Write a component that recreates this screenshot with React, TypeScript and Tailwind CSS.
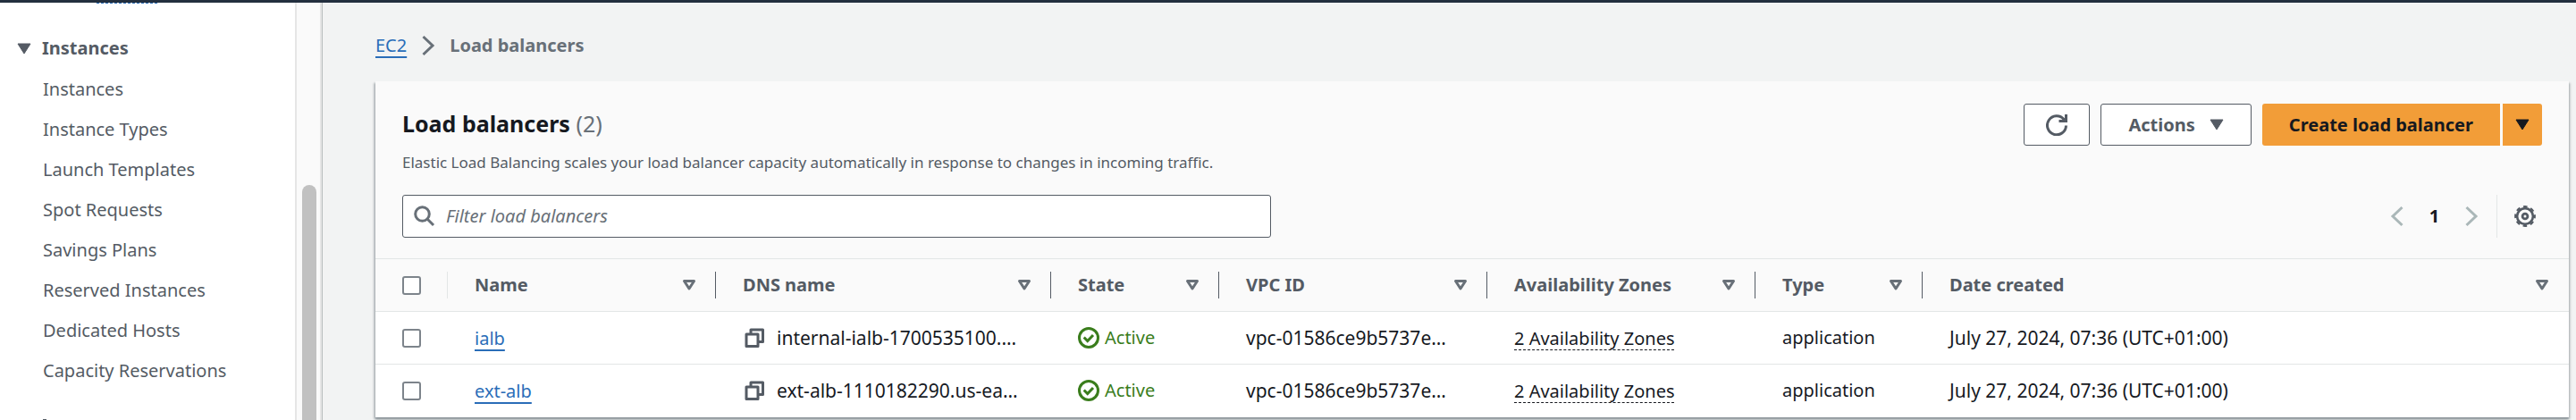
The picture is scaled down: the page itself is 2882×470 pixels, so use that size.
import React from "react";

const sidebarLinks = [
  "Instances",
  "Instance Types",
  "Launch Templates",
  "Spot Requests",
  "Savings Plans",
  "Reserved Instances",
  "Dedicated Hosts",
  "Capacity Reservations",
];

const columns = ["Name", "DNS name", "State", "VPC ID", "Availability Zones", "Type", "Date created"];

const loadBalancers = [
  {
    name: "ialb",
    dns: "internal-ialb-1700535100.…",
    state: "Active",
    vpc: "vpc-01586ce9b5737e…",
    zones: "2 Availability Zones",
    type: "application",
    created: "July 27, 2024, 07:36 (UTC+01:00)",
  },
  {
    name: "ext-alb",
    dns: "ext-alb-1110182290.us-ea…",
    state: "Active",
    vpc: "vpc-01586ce9b5737e…",
    zones: "2 Availability Zones",
    type: "application",
    created: "July 27, 2024, 07:36 (UTC+01:00)",
  },
];

function CaretDown({ className = "" }: { className?: string }) {
  return (
    <svg viewBox="0 0 16 13" className={`h-[13px] w-4 shrink-0 ${className}`} aria-hidden="true">
      <path d="M1 1h14L8 12z" fill="currentColor" stroke="currentColor" strokeLinejoin="round" />
    </svg>
  );
}

function SortIcon() {
  return (
    <svg viewBox="0 0 16 14" className="h-3.5 w-4" aria-hidden="true">
      <path d="M2.5 2.5h11L8 11z" fill="none" stroke="currentColor" strokeWidth="3" strokeLinejoin="round" />
    </svg>
  );
}

function Chevron({ flip = false, className = "" }: { flip?: boolean; className?: string }) {
  return (
    <svg viewBox="0 0 16 24" className={`h-6 w-4 ${className}`} aria-hidden="true">
      <path
        d={flip ? "M13.500 2L3 12l10.500 10" : "M2.500 2L13 12L2.500 22"}
        fill="none"
        stroke="currentColor"
        strokeWidth="3"
      />
    </svg>
  );
}

function SearchIcon() {
  return (
    <svg viewBox="0 0 24 24" className="h-6 w-6 shrink-0" aria-hidden="true">
      <g fill="none" stroke="currentColor" strokeWidth="3">
        <circle cx="9.500" cy="9.500" r="7.800" />
        <path d="M15 15L22 22" />
      </g>
    </svg>
  );
}

function RefreshIcon() {
  return (
    <svg viewBox="0 0 24 24" className="h-6 w-6" aria-hidden="true">
      <g fill="none" stroke="currentColor" strokeWidth="3">
        <path d="M22.500 12.500A10.500 10.500 0 1 1 20 5.500L22 8" />
        <path d="M22.500 0v7.500H14.500" />
      </g>
    </svg>
  );
}

function GearIcon() {
  return (
    <svg viewBox="0 0 24 24" className="h-6 w-6" aria-hidden="true">
      <g fill="none" stroke="currentColor">
        <circle cx="12" cy="12" r="8.900" strokeWidth="2.600" />
        <circle cx="12" cy="12" r="10.800" strokeWidth="2.200" strokeDasharray="4.600 3.882" strokeDashoffset="2.300" />
        <circle cx="12" cy="12" r="2.900" strokeWidth="2.800" />
      </g>
    </svg>
  );
}

function CopyIcon() {
  return (
    <svg viewBox="0 0 22 22" className="h-[22px] w-[22px] shrink-0" aria-hidden="true">
      <g fill="none" stroke="currentColor" strokeWidth="3" strokeLinejoin="round">
        <path d="M2 7h13v13.500H2z" />
        <path d="M7 7V2h13.500v13.500H15" />
      </g>
    </svg>
  );
}

function CheckCircle() {
  return (
    <svg viewBox="0 0 24 24" className="h-6 w-6 shrink-0" aria-hidden="true">
      <g fill="none" stroke="currentColor" strokeWidth="3">
        <circle cx="12" cy="12" r="10.500" />
        <path d="M6.700 11.500l4 4 6.300-6.500" />
      </g>
    </svg>
  );
}

function Checkbox({ label }: { label: string }) {
  return (
    <input
      type="checkbox"
      aria-label={label}
      className="block h-[21px] w-[21px] appearance-none rounded-[3px] border-2 border-[#7d848b] bg-white"
    />
  );
}

function Sidebar() {
  return (
    <div className="flex w-[361px] shrink-0 border-r border-[#b9bebe] bg-white">
      <nav aria-label="EC2" className="relative flex-1 overflow-hidden pt-9">
        <span className="absolute left-[108px] top-0 w-[68px] border-t border-dashed border-[#2a6db8]" />
        <button className="ml-[19px] flex h-[30px] items-center gap-3 text-xl font-bold">
          <CaretDown />
          Instances
        </button>
        <ul className="mt-2 pl-12">
          {sidebarLinks.map((link) => (
            <li key={link} className="flex h-[45px] items-center">
              <a href="#">{link}</a>
            </li>
          ))}
        </ul>
        <span className="absolute bottom-0 left-12 h-px w-1 bg-[#545b64]" />
      </nav>
      <div className="w-[30px] border-x-2 border-[#e6e6e6] bg-[#fafafa] pl-1.5 pt-[204px]">
        <div className="h-full w-4 rounded-t-full bg-[#c1c1c1]" />
      </div>
    </div>
  );
}

function Toolbar() {
  return (
    <div className="flex items-start justify-between">
      <div>
        <h1 className="text-[25px] font-bold leading-9 text-[#16191f]">
          Load balancers <span className="font-normal text-[#687078]">(2)</span>
        </h1>
        <p className="mt-3.5 text-[17px] leading-6">
          Elastic Load Balancing scales your load balancer capacity automatically in response to changes in incoming
          traffic.
        </p>
      </div>
      <div className="-mt-1 flex gap-3 text-xl font-bold">
        <button
          aria-label="Refresh"
          className="flex h-[47px] w-[74px] items-center justify-center rounded-[3px] border border-[#545b64] bg-white"
        >
          <RefreshIcon />
        </button>
        <button className="flex h-[47px] items-center gap-4 rounded-[3px] border border-[#545b64] bg-white px-[30px]">
          Actions
          <CaretDown />
        </button>
        <div className="flex gap-[3px] text-[#16191f]">
          <button className="h-[47px] rounded-l-[3px] bg-[#f29d38] px-[30px]">Create load balancer</button>
          <button
            aria-label="More create options"
            className="flex h-[47px] w-11 items-center justify-center rounded-r-[3px] bg-[#f29d38]"
          >
            <CaretDown />
          </button>
        </div>
      </div>
    </div>
  );
}

function FilterRow() {
  return (
    <div className="mt-6 flex items-center justify-between">
      <label className="flex h-12 w-[972px] items-center gap-3 rounded-[3px] border border-[#545b64] bg-white px-3 text-[#687078]">
        <SearchIcon />
        <input
          type="text"
          aria-label="Filter load balancers"
          placeholder="Filter load balancers"
          className="w-full bg-transparent italic outline-none placeholder:text-[#687078] placeholder:opacity-100"
        />
      </label>
      <div className="flex items-center">
        <button aria-label="Previous page" className="text-[#aab7b8]">
          <Chevron flip />
        </button>
        <button className="w-[67px] font-bold text-[#16191f]">1</button>
        <button aria-label="Next page" className="text-[#aab7b8]">
          <Chevron />
        </button>
        <div className="ml-5 flex h-12 items-center border-l border-[#e3e6e6] pl-[19px] pr-[7px]">
          <button aria-label="Preferences">
            <GearIcon />
          </button>
        </div>
      </div>
    </div>
  );
}

function LoadBalancerTable() {
  return (
    <table className="w-full table-fixed border-collapse text-left">
      <colgroup>
        <col className="w-[81px]" />
        <col className="w-[300px]" />
        <col className="w-[375px]" />
        <col className="w-[188px]" />
        <col className="w-[300px]" />
        <col className="w-[300px]" />
        <col className="w-[187px]" />
        <col />
      </colgroup>
      <thead>
        <tr className="h-[59px] border-y border-[#e3e6e6] bg-[#fafafa]">
          <th className="p-0">
            <div className="flex h-[30px] items-center border-r border-[#e3e6e6] pl-[30px]">
              <Checkbox label="Select all load balancers" />
            </div>
          </th>
          {columns.map((column, index) => (
            <th key={column} scope="col" className="p-0 font-bold">
              <div
                className={
                  index < columns.length - 1
                    ? "flex h-[30px] items-center justify-between border-r border-[#545b64] pl-[30px] pr-[21px]"
                    : "flex h-[30px] items-center justify-between pl-[30px] pr-[22px]"
                }
              >
                {column}
                <button aria-label={`Sort by ${column}`} className="text-[#687078]">
                  <SortIcon />
                </button>
              </div>
            </th>
          ))}
        </tr>
      </thead>
      <tbody className="whitespace-nowrap bg-white text-[21px] text-[#16191f]">
        {loadBalancers.map((lb) => (
          <tr key={lb.name} className="h-[59px] border-b border-[#e3e6e6] last:border-b-0">
            <td className="p-0 pl-[30px]">
              <Checkbox label={`Select ${lb.name}`} />
            </td>
            <td className="p-0 pl-[30px]">
              <a
                href="#"
                className="text-xl text-[#2a6db8] underline decoration-2 underline-offset-[5px] [text-decoration-skip-ink:none]"
              >
                {lb.name}
              </a>
            </td>
            <td className="p-0 pl-8">
              <div className="flex items-center gap-3.5">
                <button aria-label={`Copy DNS name of ${lb.name}`} className="text-[#545b64]">
                  <CopyIcon />
                </button>
                {lb.dns}
              </div>
            </td>
            <td className="p-0 pl-[30px]">
              <div className="flex items-center gap-1.5 text-xl text-[#3a7d1c]">
                <CheckCircle />
                {lb.state}
              </div>
            </td>
            <td className="p-0 pl-[30px]">{lb.vpc}</td>
            <td className="p-0 pl-[30px]">
              <span className="text-xl underline decoration-dashed decoration-1 underline-offset-[5px] [text-decoration-skip-ink:none]">
                {lb.zones}
              </span>
            </td>
            <td className="p-0 pl-[30px] text-xl">{lb.type}</td>
            <td className="p-0 pl-[30px]">{lb.created}</td>
          </tr>
        ))}
      </tbody>
    </table>
  );
}

export default function App() {
  return (
    <div className="flex min-h-screen flex-col bg-[#f2f3f3] font-['Noto_Sans',sans-serif] text-xl leading-[30px] text-[#545b64]">
      <header className="h-[3px] bg-[#232f3e]" />
      <div className="flex flex-1">
        <Sidebar />
        <main className="min-w-0 flex-1 pl-[59px] pr-2">
          <nav aria-label="Breadcrumb" className="flex items-center gap-4 pt-[33px]">
            <a
              href="#"
              className="text-[#2a6db8] underline decoration-2 underline-offset-[5px] [text-decoration-skip-ink:none]"
            >
              EC2
            </a>
            <Chevron className="text-[#687078]" />
            <span className="font-bold text-[#687078]">Load balancers</span>
          </nav>
          <section className="mt-[25px] bg-[#fafafa] shadow-[0_2px_2px_0_#879196,2px_2px_2px_0_#d0d3d4,-2px_2px_2px_0_#c0c5c7]">
            <div className="px-[30px] pb-[23px] pt-[29px]">
              <Toolbar />
              <FilterRow />
            </div>
            <LoadBalancerTable />
          </section>
        </main>
      </div>
    </div>
  );
}
